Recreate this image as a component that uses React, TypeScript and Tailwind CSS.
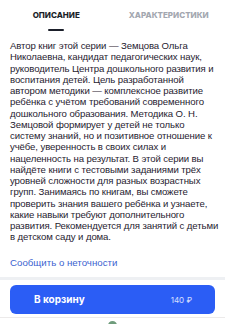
const lines = [
  "Автор книг этой серии — Земцова Ольга",
  "Николаевна, кандидат педагогических наук,",
  "руководитель Центра дошкольного развития и",
  "воспитания детей. Цель разработанной",
  "автором методики — комплексное развитие",
  "ребёнка с учётом требований современного",
  "дошкольного образования. Методика О. Н.",
  "Земцовой формирует у детей не только",
  "систему знаний, но и позитивное отношение к",
  "учёбе, уверенность в своих силах и",
  "нацеленность на результат. В этой серии вы",
  "найдёте книги с тестовыми заданиями трёх",
  "уровней сложности для разных возрастных",
  "групп. Занимаясь по книгам, вы сможете",
  "проверить знания вашего ребёнка и узнаете,",
  "какие навыки требуют дополнительного",
  "развития. Рекомендуется для занятий с детьми",
  "в детском саду и дома.",
];

export default function App() {
  return (
    <div className="w-[225px] h-[324px] overflow-hidden bg-white font-['Liberation_Sans',sans-serif] flex flex-col">
      {/* Tabs */}
      <div className="flex shrink-0 h-[40px] pt-[10px] font-['Inter',sans-serif]">
        <div className="w-1/2 flex flex-col items-center">
          <span className="text-[8px] leading-[10px] font-extrabold text-[#1b1f2a]">
            ОПИСАНИЕ
          </span>
          <span className="mt-[9px] w-[16px] h-[1.5px] bg-[#1b1f2a] rounded-full" />
        </div>
        <div className="w-1/2 flex justify-center">
          <span className="text-[8px] leading-[10px] font-extrabold text-[#a3a7b0]">
            ХАРАКТЕРИСТИКИ
          </span>
        </div>
      </div>

      {/* Description */}
      <p className="shrink-0 px-[10px] text-[9.6px] leading-[11.25px] tracking-[-0.1px] text-[#1f2230]">
        {lines.map((l, i) => (
          <span key={i} className="block whitespace-nowrap">
            {l}
          </span>
        ))}
      </p>

      <a className="shrink-0 mx-[10px] mt-[14px] text-[9.7px] leading-[12px] text-[#3b5fd0]">
        Сообщить о неточности
      </a>

      {/* Bottom bar */}
      <div className="mt-auto shrink-0 border-t-[3px] border-[#eef0f3] pt-[5px] pb-[3px] px-[10px] bg-white font-['Inter',sans-serif]">
        <button className="w-full h-[29px] rounded-[6px] bg-[#2b5df5] flex items-center justify-between pl-[24px] pr-[23px]">
          <span className="text-[10px] font-bold text-white">В корзину</span>
          <span className="text-[8px] text-white/80">140 ₽</span>
        </button>
      </div>
      <div className="shrink-0 h-[7px] border-t border-[#eceaea] flex justify-center">
        <span className="mt-[3px] w-[9px] h-[9px] rounded-full bg-[#6f9c7c]" />
      </div>
    </div>
  );
}
